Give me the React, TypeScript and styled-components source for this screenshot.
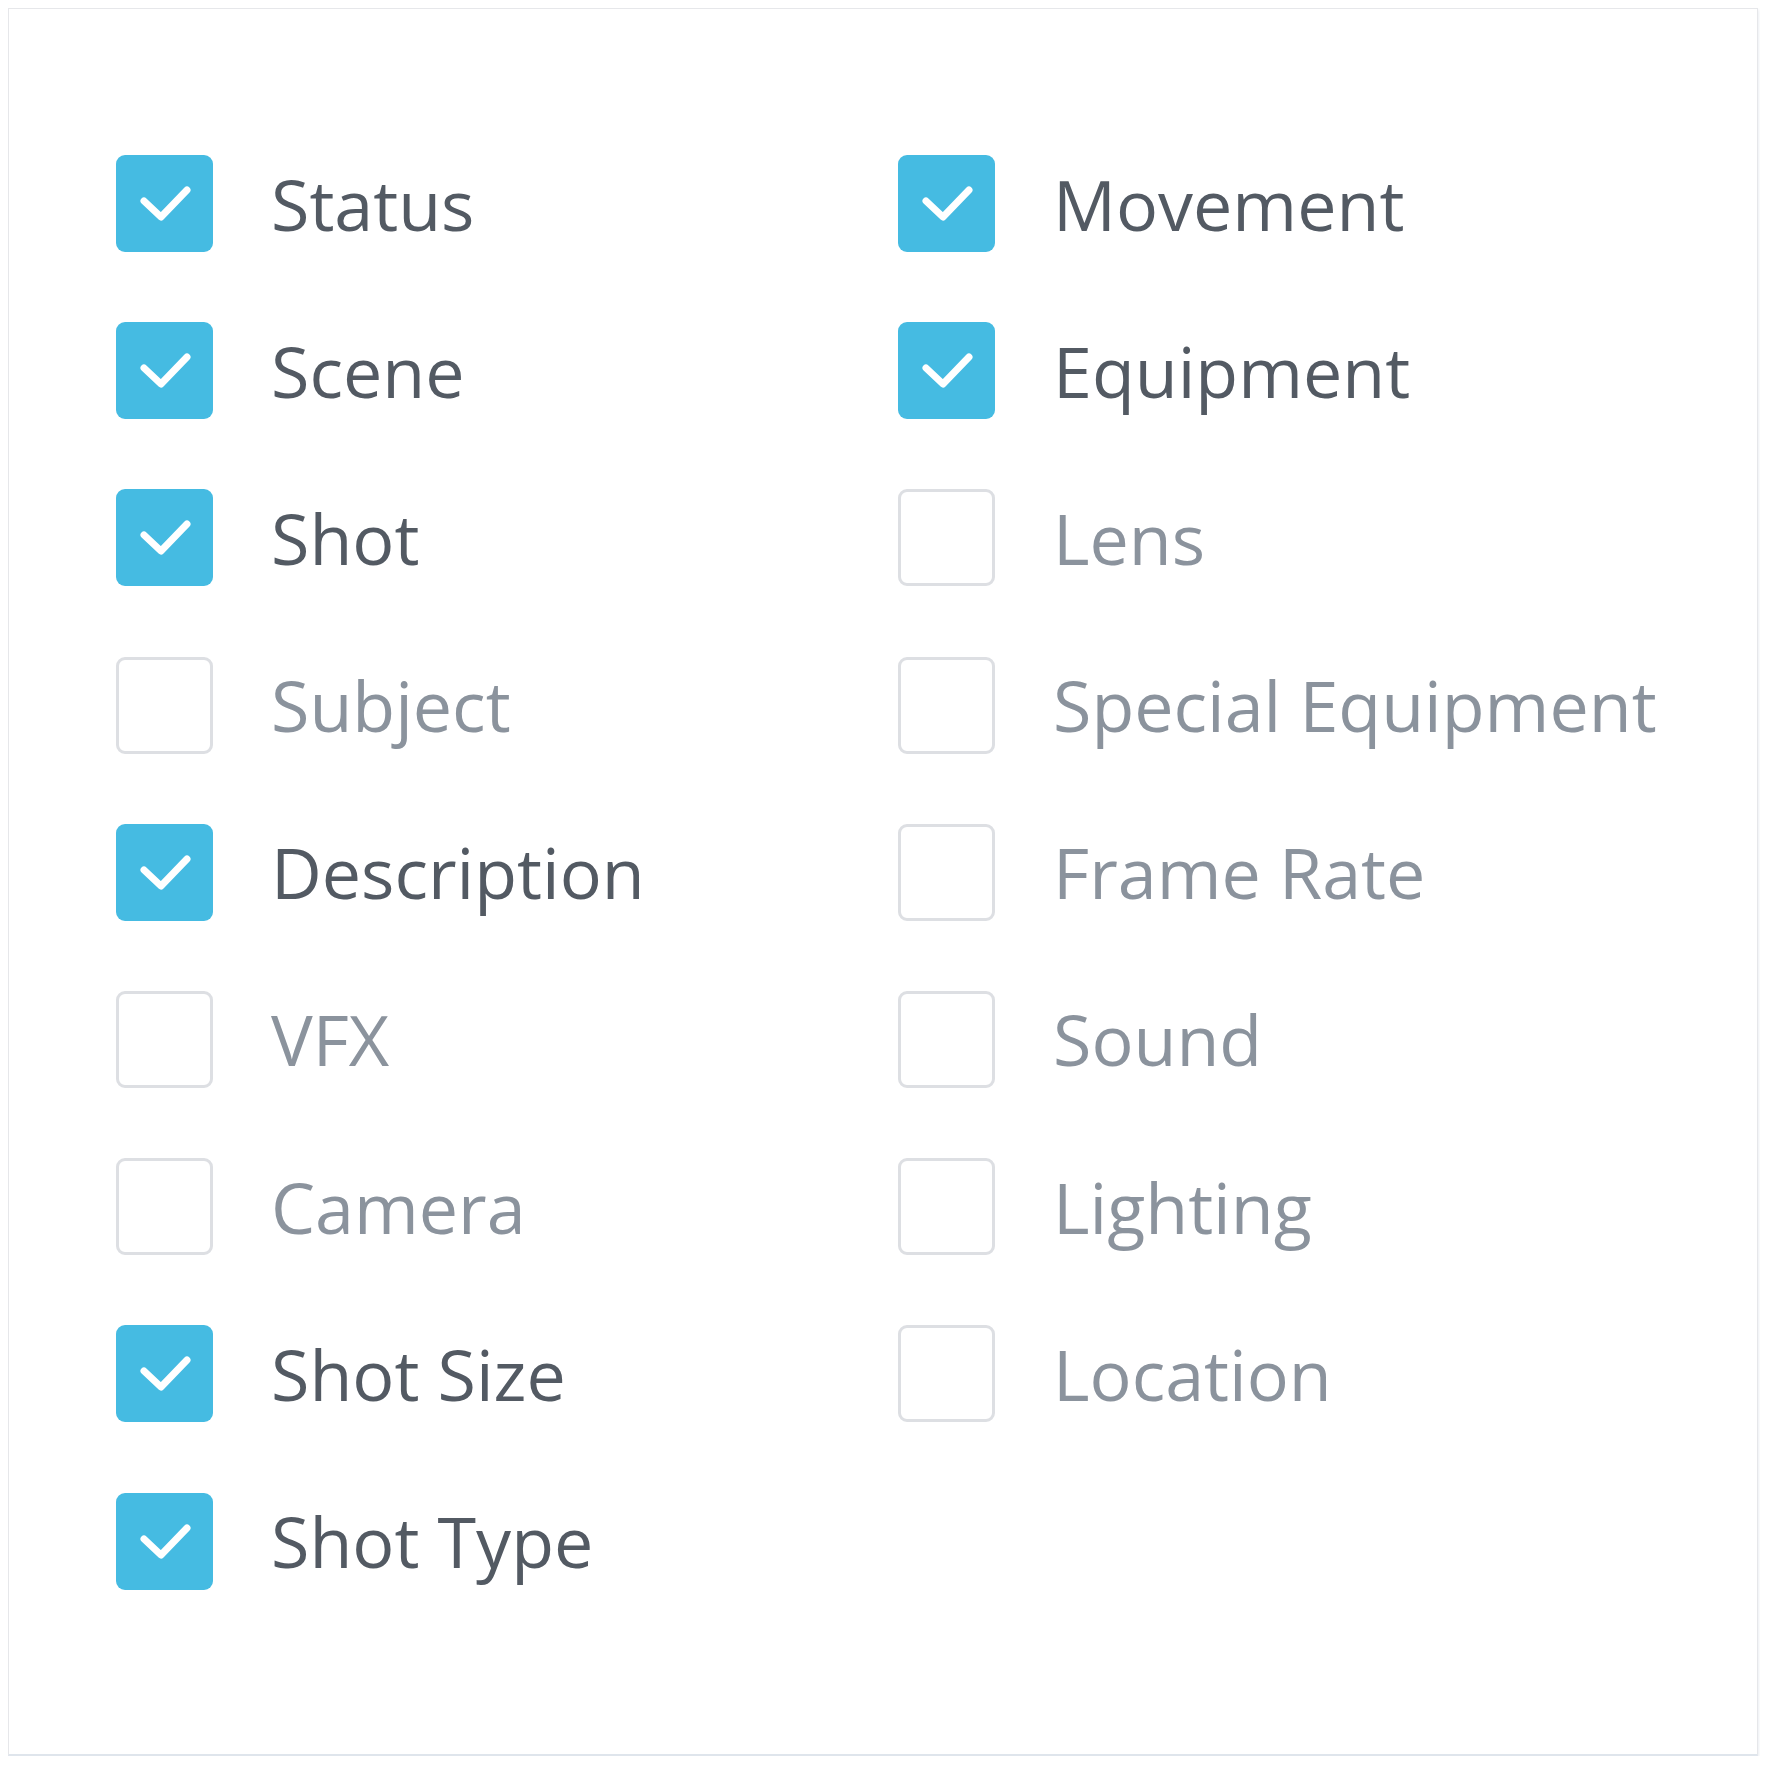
import React from 'react';
import styled, { createGlobalStyle } from 'styled-components';

interface IColumnOption {
  label: string;
  checked: boolean;
}

const options: IColumnOption[] = [
  { label: 'Status', checked: true },
  { label: 'Scene', checked: true },
  { label: 'Shot', checked: true },
  { label: 'Subject', checked: false },
  { label: 'Description', checked: true },
  { label: 'VFX', checked: false },
  { label: 'Camera', checked: false },
  { label: 'Shot Size', checked: true },
  { label: 'Shot Type', checked: true },
  { label: 'Movement', checked: true },
  { label: 'Equipment', checked: true },
  { label: 'Lens', checked: false },
  { label: 'Special Equipment', checked: false },
  { label: 'Frame Rate', checked: false },
  { label: 'Sound', checked: false },
  { label: 'Lighting', checked: false },
  { label: 'Location', checked: false },
];

const GlobalStyle = createGlobalStyle`
  body {
    margin: 8px;
    background: #ffffff;
    font-family: 'Open Sans', 'Noto Sans', sans-serif;
  }
`;

const Card = styled.div`
  box-sizing: border-box;
  width: 1750px;
  height: 1748px;
  padding: 146px 0 0 107px;
  background: #ffffff;
  border: 1px solid #e6e7ea;
  border-bottom: 2px solid #dfe5ec;
  box-shadow: 0 2px 3px rgba(190, 200, 215, 0.5);
`;

const Grid = styled.div`
  display: grid;
  grid-auto-flow: column;
  grid-template-rows: repeat(9, 97px);
  grid-template-columns: 782px auto;
  row-gap: 70.2px;
`;

const Option = styled.label`
  display: flex;
  align-items: center;
  gap: 58px;
  cursor: pointer;
`;

const Box = styled.span<{ $checked: boolean }>`
  box-sizing: border-box;
  flex: none;
  display: flex;
  align-items: center;
  justify-content: center;
  width: 97px;
  height: 97px;
  border-radius: 9px;
  background: ${({ $checked }) => ($checked ? '#45bbe2' : '#ffffff')};
  border: ${({ $checked }) => ($checked ? 'none' : '3px solid #dddfe3')};
`;

const Label = styled.span<{ $checked: boolean }>`
  font-size: 70px;
  line-height: 1;
  color: ${({ $checked }) => ($checked ? '#535a63' : '#8b939d')};
  white-space: nowrap;
`;

const Check = () => (
  <svg width="97" height="97" viewBox="0 0 97 97">
    <polyline
      points="28,46 45,62 71,35"
      fill="none"
      stroke="#ffffff"
      strokeWidth="7"
      strokeLinecap="round"
      strokeLinejoin="round"
    />
  </svg>
);

const App: React.FC = () => (
  <>
    <GlobalStyle />
    <Card>
      <Grid>
        {options.map((opt) => (
          <Option key={opt.label}>
            <Box $checked={opt.checked}>{opt.checked && <Check />}</Box>
            <Label $checked={opt.checked}>{opt.label}</Label>
          </Option>
        ))}
      </Grid>
    </Card>
  </>
);

export default App;
